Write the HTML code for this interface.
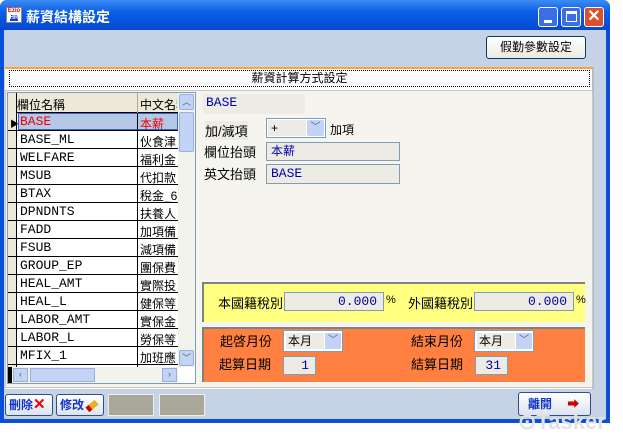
<!DOCTYPE html><html><head><meta charset="utf-8"><style>
*{box-sizing:border-box;margin:0;padding:0}
body{width:623px;height:443px;background:#fff;position:relative;overflow:hidden;font-family:"Liberation Sans","Noto Sans CJK TC",sans-serif;font-size:12px}
.a{position:absolute}
.mono{font-family:"Liberation Mono","Noto Sans CJK TC",monospace;font-size:13px}
.row{position:absolute;left:8px;width:170px;height:18px;border-bottom:1px solid #000}
.inp{position:absolute;background:#ecebe4;border:1px solid #7f9db9}
.lbl{position:absolute;font-size:13px;color:#000}
</style></head><body>
<div class="a" style="left:0;top:0;width:610px;height:423px;background:#0a4fd8;border-radius:7px 7px 0 0"></div>
<div class="a" style="left:0;top:0;width:610px;height:30px;background:linear-gradient(#3d8bf5,#0a5fe6 40%,#0548d0);border-radius:7px 7px 0 0"></div>
<div class="a" style="left:6px;top:7px;width:16px;height:16px;background:#fff;border:1px solid #888;font-size:6px;line-height:7px;color:#d00;text-align:center;font-weight:bold">Ezio<br><span style="background:#1a3fbf;color:#fff">HR</span></div>
<div class="a" style="left:26px;top:7px;color:#fff;font-size:14px;font-weight:bold">薪資結構設定</div>
<div class="a" style="left:538px;top:7px;width:20px;height:20px;background:#3a6ee8;border:1px solid #fff;border-radius:3px"><div class="a" style="left:5px;top:12px;width:8px;height:3px;background:#fff"></div></div>
<div class="a" style="left:561px;top:7px;width:20px;height:20px;background:#3a6ee8;border:1px solid #fff;border-radius:3px"><div class="a" style="left:4px;top:3px;width:11px;height:11px;border:1px solid #fff;border-top-width:3px"></div></div>
<div class="a" style="left:584px;top:7px;width:20px;height:20px;background:#d9502a;border:1px solid #fff;border-radius:3px;color:#fff;font-weight:bold;font-size:16px;line-height:18px;text-align:center">✕</div>
<div class="a" style="left:4px;top:30px;width:602px;height:389px;background:#c6d3e6"></div>
<div class="a" style="left:486px;top:36px;width:100px;height:23px;background:linear-gradient(#fff,#ece9e0);border:1px solid #003c74;border-radius:3px;text-align:center;line-height:21px;font-size:12px">假勤參數設定</div>
<div class="a" style="left:5px;top:67px;width:589px;height:322px;background:#fcfcfe;border-top:2px solid #f7a732;border-right:2px solid #bbb"></div>
<div class="a" style="left:9px;top:70px;width:581px;height:17px;border:1px dotted #000;text-align:center;font-size:12px;line-height:15px">薪資計算方式設定</div>
<div class="a" style="left:5px;top:90px;width:588px;height:298px;background:#f5f4ef;border:1px solid #c8c8c0"></div>
<div class="a" style="left:7px;top:92px;width:189px;height:292px;background:#fff;border:1px solid #7f9db9"></div>
<div class="a" style="left:8px;top:93px;width:170px;height:20px;background:#ece9d8;border-bottom:1px solid #000"></div>
<div class="a" style="left:8px;top:93px;width:9px;height:274px;background:#ece9d8;border-right:1px solid #000"></div>
<div class="a" style="left:17px;top:96px;font-size:12px">欄位名稱</div>
<div class="a" style="left:137px;top:93px;width:1px;height:20px;background:#aaa"></div>
<div class="a" style="left:140px;top:96px;font-size:12px;white-space:nowrap;width:37px;overflow:hidden">中文名稱</div>
<div class="a" style="left:18px;top:113px;width:160px;height:17px;background:#b5c8e8;border:1px solid #316ac5"></div>
<div class="a" style="left:10px;top:117px;font-size:9px">▶</div>
<div id="rows"></div>
<div class="a" style="left:137px;top:113px;width:1px;height:254px;background:#000"></div>
<div class="a" style="left:178px;top:93px;width:17px;height:274px;background:#f3f3ee"></div>
<div class="a" style="left:179px;top:94px;width:15px;height:16px;background:#c3d3f5;border:1px solid #98b0e0;border-radius:2px;color:#4d6185;font-size:9px;text-align:center;line-height:14px">︿</div>
<div class="a" style="left:179px;top:112px;width:15px;height:40px;background:#c3d3f5;border:1px solid #98b0e0;border-radius:2px"></div>
<div class="a" style="left:179px;top:350px;width:15px;height:16px;background:#c3d3f5;border:1px solid #98b0e0;border-radius:2px;color:#4d6185;font-size:9px;text-align:center;line-height:14px">﹀</div>
<div class="a" style="left:8px;top:367px;width:170px;height:16px;background:#f3f3ee"></div>
<div class="a" style="left:8px;top:367px;width:4px;height:16px;background:#000"></div>
<div class="a" style="left:13px;top:368px;width:15px;height:14px;background:#c3d3f5;border:1px solid #98b0e0;font-size:9px;color:#4d6185;text-align:center">‹</div>
<div class="a" style="left:30px;top:368px;width:65px;height:14px;background:#c3d3f5;border:1px solid #98b0e0"></div>
<div class="a" style="left:162px;top:368px;width:15px;height:14px;background:#c3d3f5;border:1px solid #98b0e0;font-size:9px;color:#4d6185;text-align:center">›</div>
<div class="a mono" style="left:203px;top:94px;width:102px;height:20px;background:#ecebe4;color:#00a;line-height:18px;padding-left:3px">BASE</div>
<div class="lbl" style="left:205px;top:121px;background:#ecebe4">加/減項</div>
<div class="a" style="left:266px;top:118px;width:60px;height:20px;background:#fff;border:1px solid #7f9db9"><div class="a" style="left:1px;top:1px;width:38px;height:16px;background:#ecebe4;padding-left:3px;line-height:16px">+</div><div class="a" style="left:40px;top:1px;width:17px;height:16px;background:#c3d3f5;border-radius:2px;color:#4d6185;font-size:10px;text-align:center;line-height:16px">﹀</div></div>
<div class="lbl" style="left:330px;top:121px;font-size:12px">加項</div>
<div class="lbl" style="left:204px;top:142px">欄位抬頭</div>
<div class="inp" style="left:266px;top:142px;width:134px;height:19px;color:#00a;padding-left:4px;line-height:17px">本薪</div>
<div class="lbl" style="left:204px;top:164px">英文抬頭</div>
<div class="inp mono" style="left:266px;top:164px;width:134px;height:20px;color:#00a;padding-left:4px;line-height:18px">BASE</div>
<div class="a" style="left:202px;top:282px;width:383px;height:40px;background:#ffff80;border-top:2px solid #808080;border-left:2px solid #808080"></div>
<div class="lbl" style="left:218px;top:293px">本國籍稅別</div>
<div class="inp mono" style="left:284px;top:292px;width:100px;height:19px;text-align:right;color:#00a;padding-right:6px;line-height:17px">0.000</div>
<div class="lbl" style="left:386px;top:294px;font-size:11px">%</div>
<div class="lbl" style="left:408px;top:293px">外國籍稅別</div>
<div class="inp mono" style="left:474px;top:292px;width:100px;height:19px;text-align:right;color:#00a;padding-right:6px;line-height:17px">0.000</div>
<div class="lbl" style="left:576px;top:294px;font-size:11px">%</div>
<div class="a" style="left:202px;top:327px;width:383px;height:55px;background:#ff8040;border-top:2px solid #808080;border-left:2px solid #808080"></div>
<div class="lbl" style="left:220px;top:331px">起啓月份</div>
<div class="a" style="left:283px;top:330px;width:60px;height:22px;background:#fff;border:1px solid #7f9db9"><div class="a" style="left:2px;top:2px;width:38px;height:16px;background:#ecebe4;padding-left:2px;line-height:16px">本月</div><div class="a" style="left:41px;top:2px;width:16px;height:16px;background:#c3d3f5;color:#4d6185;font-size:10px;text-align:center;line-height:16px">﹀</div></div>
<div class="lbl" style="left:411px;top:331px">結束月份</div>
<div class="a" style="left:474px;top:330px;width:60px;height:22px;background:#fff;border:1px solid #7f9db9"><div class="a" style="left:2px;top:2px;width:38px;height:16px;background:#ecebe4;padding-left:2px;line-height:16px">本月</div><div class="a" style="left:41px;top:2px;width:16px;height:16px;background:#c3d3f5;color:#4d6185;font-size:10px;text-align:center;line-height:16px">﹀</div></div>
<div class="lbl" style="left:219px;top:354px">起算日期</div>
<div class="inp mono" style="left:283px;top:356px;width:33px;height:19px;color:#00a;text-align:right;padding-right:6px;line-height:17px">1</div>
<div class="lbl" style="left:411px;top:354px">結算日期</div>
<div class="inp mono" style="left:475px;top:356px;width:33px;height:19px;color:#00a;text-align:right;padding-right:6px;line-height:17px">31</div>
<div class="a" style="left:5px;top:394px;width:48px;height:22px;background:linear-gradient(#fff,#dde3ee);border:1px solid #2b4f87;border-radius:3px;color:#1234c8;font-weight:bold;font-size:12px;line-height:20px;padding-left:3px">刪除<span style="color:#e00;font-size:15px">✕</span></div>
<div class="a" style="left:56px;top:394px;width:48px;height:22px;background:linear-gradient(#fff,#dde3ee);border:1px solid #2b4f87;border-radius:3px;color:#1234c8;font-weight:bold;font-size:12px;line-height:20px;padding-left:3px">修改<span style="display:inline-block;width:12px;height:6px;background:#e8b020;transform:rotate(-40deg);border-left:4px solid #c00;margin-left:2px"></span></div>
<div class="a" style="left:108px;top:394px;width:46px;height:22px;background:#aaa79b;border:1px solid #eee"></div>
<div class="a" style="left:159px;top:394px;width:46px;height:22px;background:#aaa79b;border:1px solid #eee"></div>
<div class="a" style="left:518px;top:392px;width:73px;height:24px;background:linear-gradient(#fff,#dde3ee);border:1px solid #2b4f87;border-radius:3px;color:#1234c8;font-weight:bold;font-size:12px;line-height:22px;padding-left:9px">離開 <span style="color:#c00;margin-left:12px">➡</span></div>
<div class="a" style="left:518px;top:409px;color:#e2e2e2;font-size:22px;font-weight:bold;font-family:'Liberation Sans',sans-serif">⊙Tasker</div>
<script>
var d=[["BASE","本薪"],["BASE_ML","伙食津"],["WELFARE","福利金"],["MSUB","代扣款"],["BTAX","稅金_6"],["DPNDNTS","扶養人"],["FADD","加項備"],["FSUB","減項備"],["GROUP_EP","團保費"],["HEAL_AMT","實際投"],["HEAL_L","健保等"],["LABOR_AMT","實保金"],["LABOR_L","勞保等"],["MFIX_1","加班應"]];
var h="";d.forEach(function(r,i){var t=113+i*18;var c=i==0?"color:#e00;":"";h+='<div class="row" style="top:'+t+'px"></div><div class="a mono" style="left:20px;top:'+(t+1)+'px;'+c+'">'+r[0]+'</div><div class="a" style="left:140px;top:'+(t+2)+'px;font-size:12px;'+c+'">'+r[1]+'</div>';});
document.getElementById("rows").innerHTML=h;
</script>
</body></html>
